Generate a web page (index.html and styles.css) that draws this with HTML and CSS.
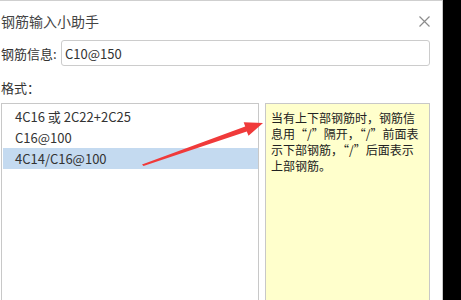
FILE: index.html
```html
<!DOCTYPE html>
<html lang="zh-CN">
<head>
  <meta charset="UTF-8">
  <title>钢筋输入小助手</title>
  <link rel="stylesheet" href="styles.css">
</head>
<body>

  <div class="dialog">
    <div class="header">
      <div class="title">钢筋输入小助手</div>
      <div class="close">
        <svg width="11" height="11" viewBox="0 0 11 11">
          <path d="M0.5 0.5 L10.5 10.5 M10.5 0.5 L0.5 10.5" stroke="#8c8c8c" stroke-width="1.2" fill="none"/>
        </svg>
      </div>
    </div>

    <div class="info-row">
      <label class="label">钢筋信息:</label>
      <input type="text" class="info-input" value="C10@150">
    </div>

    <div class="format-label">格式：</div>

    <div class="panels">
      <ul class="format-list">
        <li>4C16 或 2C22+2C25</li>
        <li>C16@100</li>
        <li class="selected">4C14/C16@100</li>
      </ul>
      <div class="note">当有上下部钢筋时，钢筋信息用“/”隔开，“/”前面表示下部钢筋，“/”后面表示上部钢筋。</div>
    </div>

    <!-- annotation arrow drawn over the screenshot -->
    <svg class="arrow" width="443" height="300" viewBox="0 0 443 300">
      <polygon points="142,164.5 245.2,126.6 243.7,122.2 263,123 248.5,135.8 246.8,131.4 143.5,166" fill="#f03a3a"/>
    </svg>
  </div>

</body>
</html>
```

FILE: styles.css
```css
* { margin: 0; padding: 0; box-sizing: border-box; }

body {
  background: #000;
  font-family: "Noto Sans CJK SC", "Noto Sans", sans-serif;
  color: #333;
  width: 461px;
  height: 300px;
  overflow: hidden;
}

.dialog {
  position: relative;
  width: 443px;
  height: 300px;
  background: #fff;
  border-top: 1px solid #cfcfcf;
  border-right: 1px solid #c8c8c8;
  padding-left: 1px;
  overflow: hidden;
}

.header {
  display: flex;
  align-items: center;
  justify-content: space-between;
  height: 39px;
  padding-right: 12px;
}

.title {
  font-size: 14px;
  color: #444;
}

.close {
  display: flex;
  margin-top: 1px;
}

.info-row {
  display: flex;
  align-items: center;
  padding-right: 12px;
}

.label {
  font-size: 13px;
  width: 60px;
}

.info-input {
  flex: 1;
  height: 26px;
  border: 1px solid #cccccc;
  border-radius: 3px;
  padding: 0 3px;
  font-family: inherit;
  font-size: 13px;
  color: #333;
  outline: none;
}

.format-label {
  font-size: 13px;
  line-height: 18px;
  margin-top: 13px;
}

.panels {
  display: flex;
  gap: 6px;
  margin-top: 6px;
}

.format-list {
  list-style: none;
  width: 258px;
  height: 220px;
  border: 1px solid #c8c8c8;
  padding: 2px 0 0 1px;
}

.format-list li {
  height: 21px;
  line-height: 21px;
  padding-left: 12px;
  font-size: 13px;
}

.format-list li.selected {
  background: #c4daf0;
}

.note {
  width: 165px;
  height: 220px;
  background: #ffffcc;
  border: 1px solid #c8c8c8;
  padding: 6px 4px 0 5px;
  font-size: 12px;
  line-height: 16px;
  color: #222;
}

.arrow {
  position: absolute;
  left: 0;
  top: -1px;
  pointer-events: none;
}
```
